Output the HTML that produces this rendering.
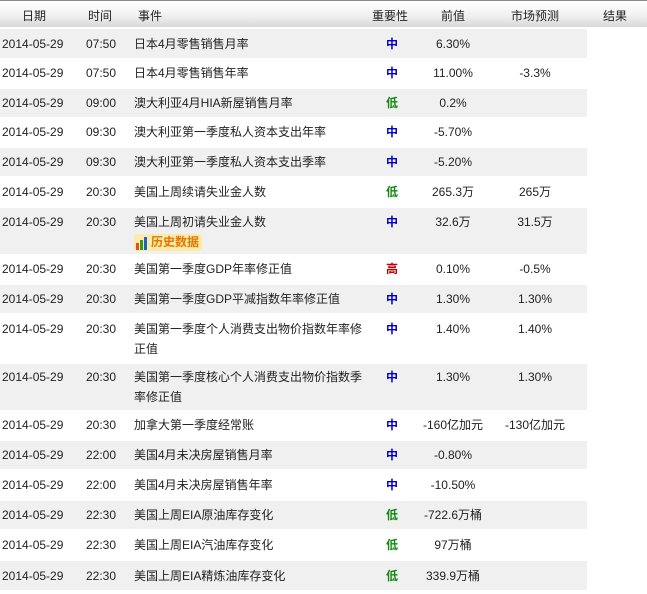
<!DOCTYPE html>
<html><head><meta charset="utf-8"><style>
body{margin:0;width:647px;height:594px;background:#fff;font-family:"Liberation Sans","Noto Sans CJK SC",sans-serif;font-size:12px;color:#222;position:relative;overflow:hidden}
.hd{position:absolute;left:0;top:0;width:647px;height:27px;border-top:1px solid #888;background:linear-gradient(#fff,#f3f3f3 50%,#d8d8d8);box-sizing:border-box}
.hd span{position:absolute;top:6px}
.r{position:absolute;left:0;width:587px}
.g{background:#f0f0f0}
.r span{position:absolute;line-height:20px}
.d{left:2px}.t{left:86px}.e{left:134px;width:236px}
.i{left:372px;width:40px;text-align:center;font-weight:bold}
.p{left:413px;width:80px;text-align:center}
.f{left:495px;width:80px;text-align:center}
.m{color:#0000c8}.l{color:#118811}.h{color:#c00000}
.badge{position:absolute;left:134px;top:26px;width:68px;height:17px;background:#fde9a8;border-radius:4px;color:#e07800;font-weight:bold;font-size:12px;line-height:17px}
</style></head><body>
<div class="hd"><span style="left:22px">日期</span><span style="left:88px">时间</span><span style="left:138px">事件</span><span style="left:372px">重要性</span><span style="left:441px">前值</span><span style="left:511px">市场预测</span><span style="left:603px">结果</span></div>

<div class="r g" style="top:29px;height:29px"><span class="d" style="top:5px">2014-05-29</span><span class="t" style="top:5px">07:50</span><span class="e" style="top:5px">日本4月零售销售月率</span><span class="i m" style="top:5px">中</span><span class="p" style="top:5px">6.30%</span><span class="f" style="top:5px"></span></div>
<div class="r" style="top:59px;height:29px"><span class="d" style="top:4px">2014-05-29</span><span class="t" style="top:4px">07:50</span><span class="e" style="top:4px">日本4月零售销售年率</span><span class="i m" style="top:4px">中</span><span class="p" style="top:4px">11.00%</span><span class="f" style="top:4px">-3.3%</span></div>
<div class="r g" style="top:89px;height:28px"><span class="d" style="top:4px">2014-05-29</span><span class="t" style="top:4px">09:00</span><span class="e" style="top:4px">澳大利亚4月HIA新屋销售月率</span><span class="i l" style="top:4px">低</span><span class="p" style="top:4px">0.2%</span></div>
<div class="r" style="top:118px;height:29px"><span class="d" style="top:4px">2014-05-29</span><span class="t" style="top:4px">09:30</span><span class="e" style="top:4px">澳大利亚第一季度私人资本支出年率</span><span class="i m" style="top:4px">中</span><span class="p" style="top:4px">-5.70%</span></div>
<div class="r g" style="top:148px;height:28px"><span class="d" style="top:4px">2014-05-29</span><span class="t" style="top:4px">09:30</span><span class="e" style="top:4px">澳大利亚第一季度私人资本支出季率</span><span class="i m" style="top:4px">中</span><span class="p" style="top:4px">-5.20%</span></div>
<div class="r" style="top:178px;height:29px"><span class="d" style="top:4px">2014-05-29</span><span class="t" style="top:4px">20:30</span><span class="e" style="top:4px">美国上周续请失业金人数</span><span class="i l" style="top:4px">低</span><span class="p" style="top:4px">265.3万</span><span class="f" style="top:4px">265万</span></div>
<div class="r g" style="top:208px;height:46px"><span class="d" style="top:4px">2014-05-29</span><span class="t" style="top:4px">20:30</span><span class="e" style="top:4px">美国上周初请失业金人数</span><span class="i m" style="top:4px">中</span><span class="p" style="top:4px">32.6万</span><span class="f" style="top:4px">31.5万</span>
<div class="badge"><svg width="14" height="15" style="position:absolute;left:2px;top:1px"><rect x="0" y="8" width="3" height="7" fill="#e05020"/><rect x="4" y="5" width="3" height="10" fill="#2a9a2a"/><rect x="8" y="2" width="3" height="13" fill="#2060c0"/></svg><span style="left:17px;line-height:17px">历史数据</span></div></div>
<div class="r" style="top:255px;height:29px"><span class="d" style="top:4px">2014-05-29</span><span class="t" style="top:4px">20:30</span><span class="e" style="top:4px">美国第一季度GDP年率修正值</span><span class="i h" style="top:4px">高</span><span class="p" style="top:4px">0.10%</span><span class="f" style="top:4px">-0.5%</span></div>
<div class="r g" style="top:285px;height:28px"><span class="d" style="top:4px">2014-05-29</span><span class="t" style="top:4px">20:30</span><span class="e" style="top:4px">美国第一季度GDP平减指数年率修正值</span><span class="i m" style="top:4px">中</span><span class="p" style="top:4px">1.30%</span><span class="f" style="top:4px">1.30%</span></div>
<div class="r" style="top:315px;height:48px"><span class="d" style="top:4px">2014-05-29</span><span class="t" style="top:4px">20:30</span><span class="e" style="top:4px">美国第一季度个人消费支出物价指数年率修<br>正值</span><span class="i m" style="top:4px">中</span><span class="p" style="top:4px">1.40%</span><span class="f" style="top:4px">1.40%</span></div>
<div class="r g" style="top:364px;height:46px"><span class="d" style="top:3px">2014-05-29</span><span class="t" style="top:3px">20:30</span><span class="e" style="top:3px">美国第一季度核心个人消费支出物价指数季<br>率修正值</span><span class="i m" style="top:3px">中</span><span class="p" style="top:3px">1.30%</span><span class="f" style="top:3px">1.30%</span></div>
<div class="r" style="top:411px;height:29px"><span class="d" style="top:4px">2014-05-29</span><span class="t" style="top:4px">20:30</span><span class="e" style="top:4px">加拿大第一季度经常账</span><span class="i m" style="top:4px">中</span><span class="p" style="top:4px">-160亿加元</span><span class="f" style="top:4px">-130亿加元</span></div>
<div class="r g" style="top:441px;height:28px"><span class="d" style="top:4px">2014-05-29</span><span class="t" style="top:4px">22:00</span><span class="e" style="top:4px">美国4月未决房屋销售月率</span><span class="i m" style="top:4px">中</span><span class="p" style="top:4px">-0.80%</span></div>
<div class="r" style="top:471px;height:29px"><span class="d" style="top:4px">2014-05-29</span><span class="t" style="top:4px">22:00</span><span class="e" style="top:4px">美国4月未决房屋销售年率</span><span class="i m" style="top:4px">中</span><span class="p" style="top:4px">-10.50%</span></div>
<div class="r g" style="top:501px;height:28px"><span class="d" style="top:4px">2014-05-29</span><span class="t" style="top:4px">22:30</span><span class="e" style="top:4px">美国上周EIA原油库存变化</span><span class="i l" style="top:4px">低</span><span class="p" style="top:4px">-722.6万桶</span></div>
<div class="r" style="top:531px;height:29px"><span class="d" style="top:4px">2014-05-29</span><span class="t" style="top:4px">22:30</span><span class="e" style="top:4px">美国上周EIA汽油库存变化</span><span class="i l" style="top:4px">低</span><span class="p" style="top:4px">97万桶</span></div>
<div class="r g" style="top:561px;height:29px"><span class="d" style="top:5px">2014-05-29</span><span class="t" style="top:5px">22:30</span><span class="e" style="top:5px">美国上周EIA精炼油库存变化</span><span class="i l" style="top:5px">低</span><span class="p" style="top:5px">339.9万桶</span></div>
</body></html>
